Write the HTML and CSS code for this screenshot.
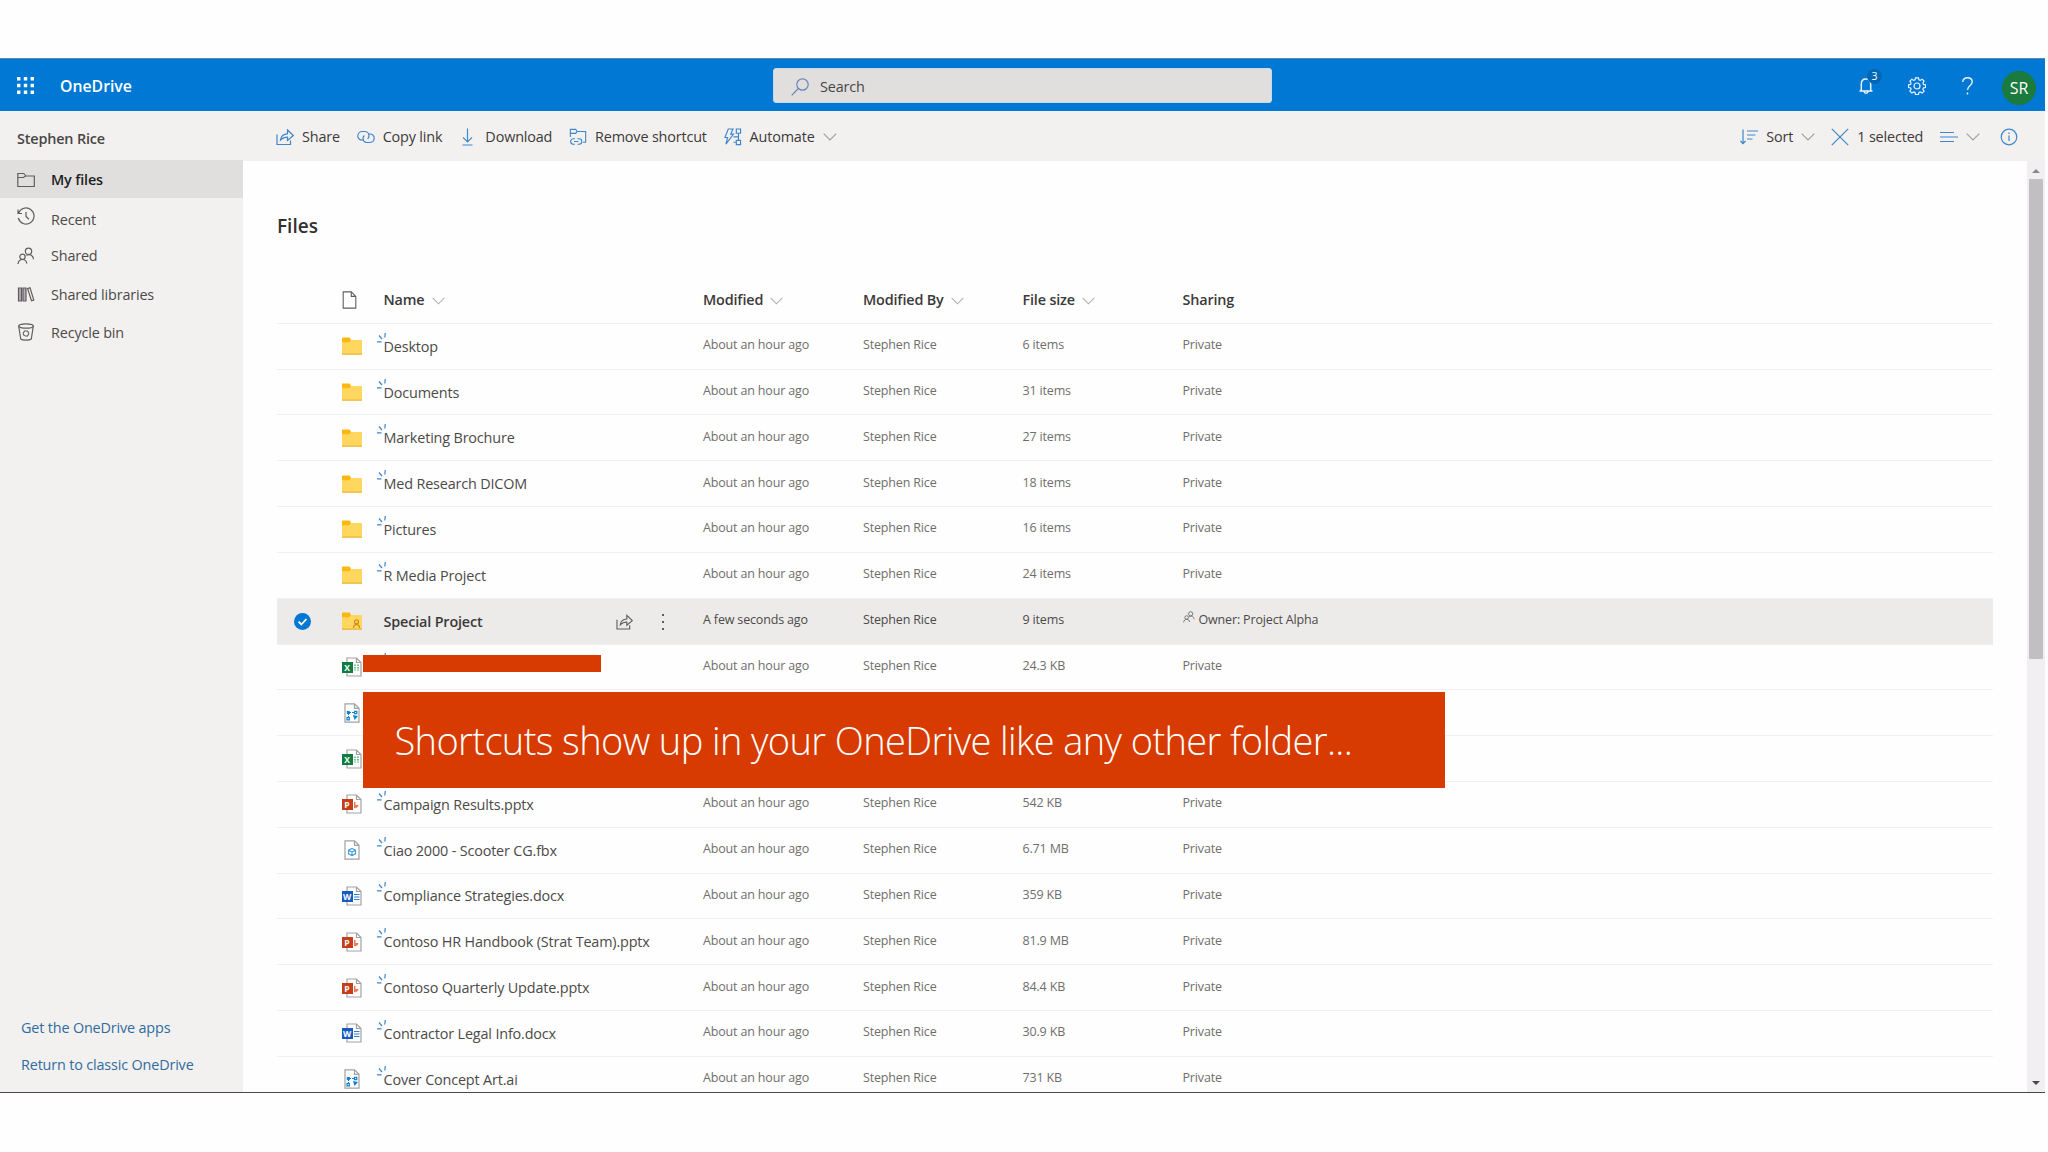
FILE: index.html
```html
<!DOCTYPE html>
<html lang="en">
<head>
<meta charset="UTF-8">
<meta name="viewport" content="width=device-width, initial-scale=1.0">
<title>My files - OneDrive</title>
<link rel="stylesheet" href="styles.css">
</head>
<body>

<!-- icon set -->
<svg class="sprite" width="0" height="0">
  <symbol id="chevron" viewBox="0 0 14 8"><path d="M.7.7 7 7 13.3.7" /></symbol>
  <symbol id="share" viewBox="0 0 18 17"><path d="M1 6v10h13.500v-4M4.500 11.500c.5-4 3-6 7-6.200V1.500l5.800 5.500-5.800 5V8.700c-3-.2-5 .8-7 2.800z" /></symbol>
  <symbol id="people" viewBox="0 0 18 18"><circle cx="11.500" cy="4.300" r="3.200" /><circle cx="5.500" cy="9.800" r="2.700" /><path d="M1 17c.3-3 2-4.500 4.500-4.500S9.500 14 9.800 16.500M9.300 8.300c4-1.800 7 .2 7.200 4" /></symbol>
  <symbol id="page" viewBox="0 0 16 20"><path d="M1 1h9l5 5v13H1zM10 1v5h5" /></symbol>
  <symbol id="spark" viewBox="0 0 10 11"><path d="M8.300 0 7.800 4.500M2 2.500l3 3.500M0 8.800h4.500" /></symbol>
  <symbol id="folder" viewBox="0 0 20 18"><path fill="#ffd75e" d="M0 3h20v14.500H0z" /><path fill="#fcb80f" d="M0 1.500C0 .8.500.5 1 .5h6.500l1.500 2-1.500 2.700H0z" /><path fill="#e5a92c" d="M0 16.600h20v1H0z" /></symbol>
  <symbol id="excel" viewBox="0 0 20 20"><path class="sheet" d="M5 1h9.500L19 5.500V19H5zM14.500 1v4.500H19" /><path fill="none" stroke="#6dbf93" stroke-width="2" stroke-dasharray="1.500 1" d="M13 7.500v6M16 7.500v6" /></symbol>
  <symbol id="ppt" viewBox="0 0 20 20"><path class="sheet" d="M5 1h9.500L19 5.500V19H5zM14.500 1v4.500H19" /><path fill="#f0765a" d="M12 8v6a3.500 3.500 0 0 0 4.500-3H13.500V8z" /></symbol>
  <symbol id="word" viewBox="0 0 20 20"><path class="sheet" d="M5 1h9.500L19 5.500V19H5zM14.500 1v4.500H19" /><path fill="none" stroke="#2b7cd3" d="M12 8.500h5.500M12 11h5.500M12 13.500h5.500" /></symbol>
  <symbol id="vector" viewBox="0 0 20 20"><path class="sheet" d="M3 .8h9.500L17 5.300V19.200H3zM12.500.8v4.500H17" /><path fill="none" stroke="#1080d0" d="M7 9.500h6M6.500 10v5" stroke-dasharray="2 1" /><path fill="#1080d0" d="M4.800 8h3v3h-3zM11 12l5 1-3.500 4z" /><path fill="none" stroke="#1080d0" d="M12.500 8.300h2.300v2.300h-2.300zM5 14.500h2.300v2.300H5z" /></symbol>
  <symbol id="model" viewBox="0 0 20 20"><path class="sheet" d="M3 .8h9.500L17 5.300V19.200H3zM12.500.8v4.500H17" /><path fill="none" stroke="#4aa0dc" d="m10 8.500 3.500 1.700v3.600L10 15.500l-3.500-1.700v-3.600zM6.500 10.200 10 12l3.500-1.800M10 12v3.500" /></symbol>
</svg>

<div class="app">
  <header class="suite-bar">
    <svg class="waffle" viewBox="0 0 17 17"><path d="M0 1.700h17M0 8.500h17M0 15.300h17" /></svg>
    <span class="brand">OneDrive</span>
    <div class="search">
      <svg class="search-icon" viewBox="0 0 18 18"><circle cx="11.500" cy="6.500" r="5.700" /><path d="M7.300 10.500.7 17.300" /></svg>
      <span>Search</span>
    </div>
    <div class="suite-actions">
      <div class="bell">
        <svg viewBox="0 0 14 18"><path d="M.5 14h13M2.300 14V7.200C2.300 4 4.200 2 7 2s4.700 2 4.700 5.200V14M5 14.500c.3 2.300 3.700 2.300 4 0" /></svg>
        <span class="badge">3</span>
      </div>
      <svg class="gear" viewBox="0 0 18 18"><path d="m7.500.8h3l.4 2 1.400.6 1.800-1.200 2 2-1.200 1.800.6 1.400 2 .4v2.700l-2 .4-.6 1.400 1.200 1.800-2 2-1.800-1.200-1.400.6-.4 2h-3l-.4-2-1.400-.6-1.800 1.200-2-2 1.200-1.800-.6-1.400-2-.4V7.800l2-.4.600-1.400L1.900 4.200l2-2 1.800 1.200 1.400-.6z" /><circle cx="9" cy="9" r="3" /></svg>
      <svg class="help" viewBox="0 0 11 18"><path d="M.8 5C.8 2.300 2.700.8 5.500.8S10.200 2.400 10.200 5c0 3.500-4.700 3.500-4.700 8M5.500 15.500v2" /></svg>
      <span class="avatar">SR</span>
    </div>
  </header>

  <div class="body">
    <nav class="sidebar">
      <div class="owner">Stephen Rice</div>
      <a class="nav-item active"><svg viewBox="0 0 18 18"><path d="M.8 15.500v-13h6l2 2.500h8.500v10.500zM.8 6.500h5.500L8.800 5" /></svg><span>My files</span></a>
      <a class="nav-item recent"><svg viewBox="0 0 18 18"><path d="M1 2.500v4h4M1.500 6.300A8 8 0 1 1 1.300 11M9 5v4.500l3 2.800" /></svg><span>Recent</span></a>
      <a class="nav-item"><svg><use href="#people" /></svg><span>Shared</span></a>
      <a class="nav-item"><svg viewBox="0 0 18 18"><path fill="#b9a9bd" d="M1.500 3h3v13h-3zM6 3h3v13H6z" /><path d="m10.500 3.500 2.500-.7L16.800 15l-2.300.8z" /></svg><span>Shared libraries</span></a>
      <a class="nav-item"><svg viewBox="0 0 18 18"><ellipse cx="9" cy="3" rx="7.300" ry="2.200" /><path d="m1.700 3 2 13c1.500 1.500 9 1.500 10.600 0l2-13M6 10.500 7.500 8h3l1.500 2.500M6 10.500l1.500 2.500M12 10.500 10.500 13H8" /></svg><span>Recycle bin</span></a>
      <div class="sidebar-links">
        <a>Get the OneDrive apps</a>
        <a>Return to classic OneDrive</a>
      </div>
    </nav>

    <div class="content">
      <div class="command-bar">
        <div class="command share"><svg><use href="#share" /></svg><span>Share</span></div>
        <div class="command copy"><svg viewBox="0 0 18 14"><path d="M7 10H5.300C2.700 10 .8 8.500.8 6s1.900-4.500 4.500-4.500h2.200C10 1.500 12 3.300 12 5.800c0 1.200-.5 2.200-1.300 3M11 4h1.500c2.700 0 4.700 1.700 4.700 4.200s-2 4.300-4.700 4.300h-2C8 12.500 6 11 6 8.500 6 7.300 6.500 6.300 7.300 5.500" /></svg><span>Copy link</span></div>
        <div class="command download"><svg viewBox="0 0 11 18"><path d="M5.500.5v13M1 9.300l4.500 4.500L10 9.300M.5 17h10" /></svg><span>Download</span></div>
        <div class="command remove"><svg viewBox="0 0 19 20"><path d="M1 10V1.500h6l1.500 2.300H18v12h-3M1 6h6l1.500-2.200M6 12H4.300a3 3 0 0 0 0 6H6M9 12h1.700a3 3 0 0 1 0 6H9M5 15h5" /></svg><span>Remove shortcut</span></div>
        <div class="command automate"><svg viewBox="0 0 19 19"><path d="M4.500 1h5L7 6.500h3L2 17l1.800-7H1zM13 1h4.500v4.500H13zM13 13h4.500v4.500H13zM15.300 5.500V13M10 9.300h5.300M10 15h3" /></svg><span>Automate</span><svg class="chevron"><use href="#chevron" /></svg></div>

        <div class="command sort"><svg viewBox="0 0 18 16"><path d="M3 .5v14M.5 12 3 14.700 5.500 12M7 2h11M7 6h8.500M7 10h5.500" /></svg><span>Sort</span><svg class="chevron"><use href="#chevron" /></svg></div>
        <div class="command selected"><svg viewBox="0 0 18 18"><path d="m.8.800 16.400 16.400M17.200.8.800 17.200" /></svg><span>1 selected</span></div>
        <div class="command view"><svg viewBox="0 0 18 12"><path d="M0 1.500h14M0 6h18M0 10.500h14" /></svg><svg class="chevron"><use href="#chevron" /></svg></div>
        <div class="command info"><svg viewBox="0 0 18 18"><circle cx="9" cy="9" r="7.800" /><path d="M9 7.500v5.500M9 4.500v1.500" /></svg></div>
      </div>

      <div class="list-area">
        <main class="files">
          <h1>Files</h1>
          <div class="row row-head">
            <span></span>
            <svg class="page-icon"><use href="#page" /></svg>
            <span>Name<svg class="chevron"><use href="#chevron" /></svg></span>
            <span>Modified<svg class="chevron"><use href="#chevron" /></svg></span>
            <span>Modified By<svg class="chevron"><use href="#chevron" /></svg></span>
            <span>File size<svg class="chevron"><use href="#chevron" /></svg></span>
            <span>Sharing</span>
          </div>
          <div class="row"><span></span><svg class="icon"><use href="#folder" /></svg><div class="name"><svg class="spark"><use href="#spark" /></svg>Desktop</div><span>About an hour ago</span><span>Stephen Rice</span><span>6 items</span><span>Private</span></div>
          <div class="row"><span></span><svg class="icon"><use href="#folder" /></svg><div class="name"><svg class="spark"><use href="#spark" /></svg>Documents</div><span>About an hour ago</span><span>Stephen Rice</span><span>31 items</span><span>Private</span></div>
          <div class="row"><span></span><svg class="icon"><use href="#folder" /></svg><div class="name"><svg class="spark"><use href="#spark" /></svg>Marketing Brochure</div><span>About an hour ago</span><span>Stephen Rice</span><span>27 items</span><span>Private</span></div>
          <div class="row"><span></span><svg class="icon"><use href="#folder" /></svg><div class="name"><svg class="spark"><use href="#spark" /></svg>Med Research DICOM</div><span>About an hour ago</span><span>Stephen Rice</span><span>18 items</span><span>Private</span></div>
          <div class="row"><span></span><svg class="icon"><use href="#folder" /></svg><div class="name"><svg class="spark"><use href="#spark" /></svg>Pictures</div><span>About an hour ago</span><span>Stephen Rice</span><span>16 items</span><span>Private</span></div>
          <div class="row"><span></span><svg class="icon"><use href="#folder" /></svg><div class="name"><svg class="spark"><use href="#spark" /></svg>R Media Project</div><span>About an hour ago</span><span>Stephen Rice</span><span>24 items</span><span>Private</span></div>
          <div class="row row-selected">
            <svg class="check" viewBox="0 0 17 17"><circle cx="8.500" cy="8.500" r="8.500" /><path d="m4.500 8.700 2.800 2.800 5.200-5.500" /></svg>
            <svg class="icon" viewBox="0 0 20 18"><use href="#folder" /><circle class="person" cx="14.500" cy="9.800" r="2" /><path class="person" d="M11.500 16c0-4.500 6-4.500 6 0" /></svg>
            <div class="name">Special Project<svg class="row-share"><use href="#share" /></svg><svg class="dots" viewBox="0 0 4 18"><path d="M1 1h2v2H1zM1 8h2v2H1zM1 15h2v2H1z" /></svg></div>
            <span>A few seconds ago</span><span>Stephen Rice</span><span>9 items</span>
            <span class="shared-by"><svg><use href="#people" /></svg>Owner: Project Alpha</span>
          </div>
          <div class="row"><span></span><div class="doc"><svg class="icon"><use href="#excel" /></svg><b class="tag excel">X</b></div><div class="name"><svg class="spark"><use href="#spark" /></svg>Art Product Ideas.xlsx</div><span>About an hour ago</span><span>Stephen Rice</span><span>24.3 KB</span><span>Private</span></div>
          <div class="row"><span></span><svg class="icon"><use href="#vector" /></svg></div>
          <div class="row"><span></span><div class="doc"><svg class="icon"><use href="#excel" /></svg><b class="tag excel">X</b></div></div>
          <div class="row"><span></span><div class="doc"><svg class="icon"><use href="#ppt" /></svg><b class="tag ppt">P</b></div><div class="name"><svg class="spark"><use href="#spark" /></svg>Campaign Results.pptx</div><span>About an hour ago</span><span>Stephen Rice</span><span>542 KB</span><span>Private</span></div>
          <div class="row"><span></span><svg class="icon"><use href="#model" /></svg><div class="name"><svg class="spark"><use href="#spark" /></svg>Ciao 2000 - Scooter CG.fbx</div><span>About an hour ago</span><span>Stephen Rice</span><span>6.71 MB</span><span>Private</span></div>
          <div class="row"><span></span><div class="doc"><svg class="icon"><use href="#word" /></svg><b class="tag word">W</b></div><div class="name"><svg class="spark"><use href="#spark" /></svg>Compliance Strategies.docx</div><span>About an hour ago</span><span>Stephen Rice</span><span>359 KB</span><span>Private</span></div>
          <div class="row"><span></span><div class="doc"><svg class="icon"><use href="#ppt" /></svg><b class="tag ppt">P</b></div><div class="name"><svg class="spark"><use href="#spark" /></svg>Contoso HR Handbook (Strat Team).pptx</div><span>About an hour ago</span><span>Stephen Rice</span><span>81.9 MB</span><span>Private</span></div>
          <div class="row"><span></span><div class="doc"><svg class="icon"><use href="#ppt" /></svg><b class="tag ppt">P</b></div><div class="name"><svg class="spark"><use href="#spark" /></svg>Contoso Quarterly Update.pptx</div><span>About an hour ago</span><span>Stephen Rice</span><span>84.4 KB</span><span>Private</span></div>
          <div class="row"><span></span><div class="doc"><svg class="icon"><use href="#word" /></svg><b class="tag word">W</b></div><div class="name"><svg class="spark"><use href="#spark" /></svg>Contractor Legal Info.docx</div><span>About an hour ago</span><span>Stephen Rice</span><span>30.9 KB</span><span>Private</span></div>
          <div class="row"><span></span><svg class="icon"><use href="#vector" /></svg><div class="name"><svg class="spark"><use href="#spark" /></svg>Cover Concept Art.ai</div><span>About an hour ago</span><span>Stephen Rice</span><span>731 KB</span><span>Private</span></div>
        </main>
        <div class="scrollbar">
          <span class="arrow-up"></span>
          <span class="thumb"></span>
          <span class="arrow-down"></span>
        </div>
      </div>
    </div>
  </div>

  <div class="strip"></div>
  <div class="caption">Shortcuts show up in your OneDrive like any other folder...</div>
</div>

</body>
</html>
```
FILE: styles.css
```css
* {
  box-sizing: border-box;
}
body {
  margin: 0;
  height: 1152px;
  overflow: hidden;
  background: #fefefe;
  color: #323130;
  font-family: 'Open Sans', 'Noto Sans', sans-serif;
  font-size: 14.4px;
  letter-spacing: -0.16px;
  line-height: 20px;
  white-space: nowrap;
}
.sprite {
  display: block;
}
svg {
  flex: none;
  fill: none;
  stroke: #605e5c;
  stroke-width: 1.2;
}
.app {
  position: relative;
  display: flex;
  flex-direction: column;
  width: 2045px;
  height: 1035px;
  margin-top: 58px;
  border-top: 1px solid #5c86ad;
  border-bottom: 1px solid #4a484a;
}

/* blue bar */
.suite-bar {
  display: flex;
  align-items: center;
  height: 52px;
  padding: 1px 0 0 17px;
  background: #0078d4;
  color: #fff;
}
.suite-bar svg {
  stroke: #e8f3fc;
}
.suite-bar .waffle {
  width: 17px;
  height: 17px;
  stroke: #fff;
  stroke-width: 3.4;
  stroke-dasharray: 3.4 3.4;
}
.brand {
  width: 713px;
  margin-left: 26px;
  padding-top: 1px;
  font-size: 15.8px;
  font-weight: 600;
  letter-spacing: 0;
}
.search {
  display: flex;
  align-items: center;
  width: 499px;
  height: 35px;
  padding-left: 17px;
  gap: 11px;
  border: 1px solid #c4d9ea;
  border-radius: 3px;
  background: #e1dfdd;
  color: #484644;
}
.search span {
  padding-top: 2px;
}
.suite-bar .search-icon {
  width: 18px;
  height: 18px;
  margin-top: 2px;
  stroke: #6d84b8;
}
.suite-actions {
  display: flex;
  align-items: center;
  margin-left: auto;
  padding-right: 9px;
}
.bell {
  position: relative;
  height: 18px;
  margin-right: 35px;
}
.bell svg {
  width: 14px;
  height: 18px;
  display: block;
  stroke-width: 1.5;
}
.badge {
  position: absolute;
  left: 8px;
  top: -8px;
  width: 15px;
  height: 15px;
  border-radius: 50%;
  background: #0067b5;
  font-size: 10.5px;
  line-height: 15px;
  text-align: center;
}
.gear {
  width: 18px;
  height: 18px;
  margin-right: 36px;
}
.help {
  width: 11px;
  height: 18px;
  margin-right: 29px;
  stroke-width: 1.4;
}
.avatar {
  width: 34px;
  height: 34px;
  margin-top: 4px;
  border-radius: 50%;
  background: #1b7a3d;
  font-size: 16px;
  line-height: 35px;
  text-align: center;
}

/* left navigation */
.body {
  display: flex;
  flex: 1;
  min-height: 0;
}
.sidebar {
  display: flex;
  flex-direction: column;
  width: 243px;
  background: #f3f1f0;
}
.owner {
  height: 49px;
  padding: 18px 0 0 17px;
  font-weight: 600;
  color: #484644;
}
.nav-item {
  display: flex;
  align-items: center;
  height: 38.2px;
  padding-left: 17px;
  gap: 16px;
  color: #4c4a48;
}
.nav-item span {
  padding-top: 2px;
}
.nav-item svg {
  width: 18px;
  height: 18px;
  margin-top: 1px;
}
.nav-item.active {
  background: #e1dfde;
  font-weight: 600;
  color: #201f1e;
}
.nav-item.recent {
  padding-top: 3px;
}
.nav-item.recent svg {
  margin-top: -6px;
}
.sidebar-links {
  display: flex;
  flex-direction: column;
  gap: 17.5px;
  margin-top: auto;
  padding: 0 0 17px 21px;
  color: #2f6c9f;
}

/* command bar */
.content {
  display: flex;
  flex-direction: column;
  flex: 1;
}
.command-bar {
  display: flex;
  align-items: center;
  height: 50px;
  padding: 1px 27px 0 33px;
  background: #f3f1f0;
  color: #3b3a39;
}
.command {
  display: flex;
  align-items: center;
  margin-right: 16.8px;
}
.command span {
  padding-top: 1px;
}
.command svg {
  width: 18px;
  height: 18px;
  margin-right: 8px;
  stroke: #3f86cc;
}
.command .chevron {
  width: 14px;
  height: 8px;
  margin: 0 0 0 8px;
  stroke: #a19f9d;
}
.command.copy {
  margin-right: 20px;
}
.command.download svg {
  width: 11px;
  margin-right: 12px;
}
.command.sort {
  margin-left: auto;
  margin-right: 16px;
}
.command.view {
  margin-right: 20px;
}
.command.view .chevron {
  margin-left: 0;
}
.command.info,
.command.info svg {
  margin-right: 0;
}

/* file list */
.list-area {
  display: flex;
  flex: 1;
  min-height: 0;
}
.files {
  flex: 1;
  padding: 0 34px;
  overflow: hidden;
}
h1 {
  margin: 0;
  padding-top: 51px;
  height: 117px;
  font-size: 19px;
  line-height: 28px;
  font-weight: 600;
  letter-spacing: 0;
}
.row {
  display: grid;
  grid-template-columns: 64.5px 42px 319.5px 160px 159.5px 160px 1fr;
  align-items: center;
  height: 45.82px;
  border-bottom: 1px solid #f2f0f1;
  font-size: 12.5px;
  color: #706e6c;
}
.row > span {
  margin-top: -2px;
}
.icon {
  display: block;
  width: 20px;
  height: 20px;
  stroke: none;
}
.sheet {
  fill: #fff;
  stroke: #a3a1a0;
}
/* app letter on the corner of a document icon */
.doc {
  position: relative;
  width: 20px;
}
.tag {
  position: absolute;
  left: 0;
  top: 5px;
  width: 11px;
  height: 11px;
  color: #fff;
  font-size: 8.5px;
  line-height: 11px;
  letter-spacing: 0;
  text-align: center;
}
.tag.excel {
  background: #107c41;
}
.tag.ppt {
  background: #c43e1c;
}
.tag.word {
  background: #185abd;
}
.row-head {
  font-size: 14.4px;
  font-weight: 600;
  color: #3b3a39;
}
.row-head > span {
  margin-top: 0;
}
.page-icon {
  width: 15px;
  height: 18px;
}
.row-head .chevron {
  width: 13px;
  height: 8px;
  margin-left: 7px;
  stroke: #b3b0ad;
}
.name {
  position: relative;
  display: flex;
  align-items: center;
  padding-top: 1px;
  font-size: 14.4px;
  color: #4c4a48;
}
/* "new item" mark, hangs off the corner of the name */
.spark {
  position: absolute;
  left: -7px;
  top: -3px;
  width: 10px;
  height: 11px;
  stroke: #3a86d0;
}
.row-selected {
  background: #ecebea;
  color: #4c4a48;
}
.row-selected .name {
  font-weight: 600;
  color: #3b3a39;
}
.check {
  width: 17px;
  height: 17px;
  margin-left: 17px;
  stroke: #fff;
  stroke-width: 1.8;
}
.check circle {
  fill: #0078d4;
  stroke: none;
}
.person {
  stroke: #d08a1c;
}
.row-share {
  width: 17px;
  height: 16px;
  margin: 0 0 0 auto;
}
.dots {
  width: 4px;
  height: 18px;
  margin: 0 38.5px 0 28px;
  fill: #605e5c;
  stroke: none;
}
.shared-by {
  display: flex;
  gap: 4px;
}
.shared-by svg {
  width: 12px;
  height: 14px;
}
.scrollbar {
  display: flex;
  flex-direction: column;
  align-items: center;
  width: 18px;
  background: #f1eff1;
}
.arrow-up,
.arrow-down {
  border: 4px solid transparent;
}
.arrow-up {
  margin: 8px 0 6px;
  border-top: 0;
  border-bottom-color: #8a8886;
}
.arrow-down {
  margin: auto 0 7px;
  border-bottom: 0;
  border-top-color: #4a484a;
}
.thumb {
  width: 14px;
  height: 480px;
  background: #c1bfc1;
}

/* caption banner over the list */
.strip {
  position: absolute;
  left: 363px;
  top: 596px;
  width: 238px;
  height: 17px;
  background: #d83b01;
}
.caption {
  position: absolute;
  left: 363px;
  top: 633px;
  width: 1082px;
  height: 96px;
  padding-left: 31.5px;
  background: #d83b01;
  color: #fff;
  font-size: 38px;
  font-weight: 300;
  letter-spacing: -0.61px;
  line-height: 96px;
}
```
